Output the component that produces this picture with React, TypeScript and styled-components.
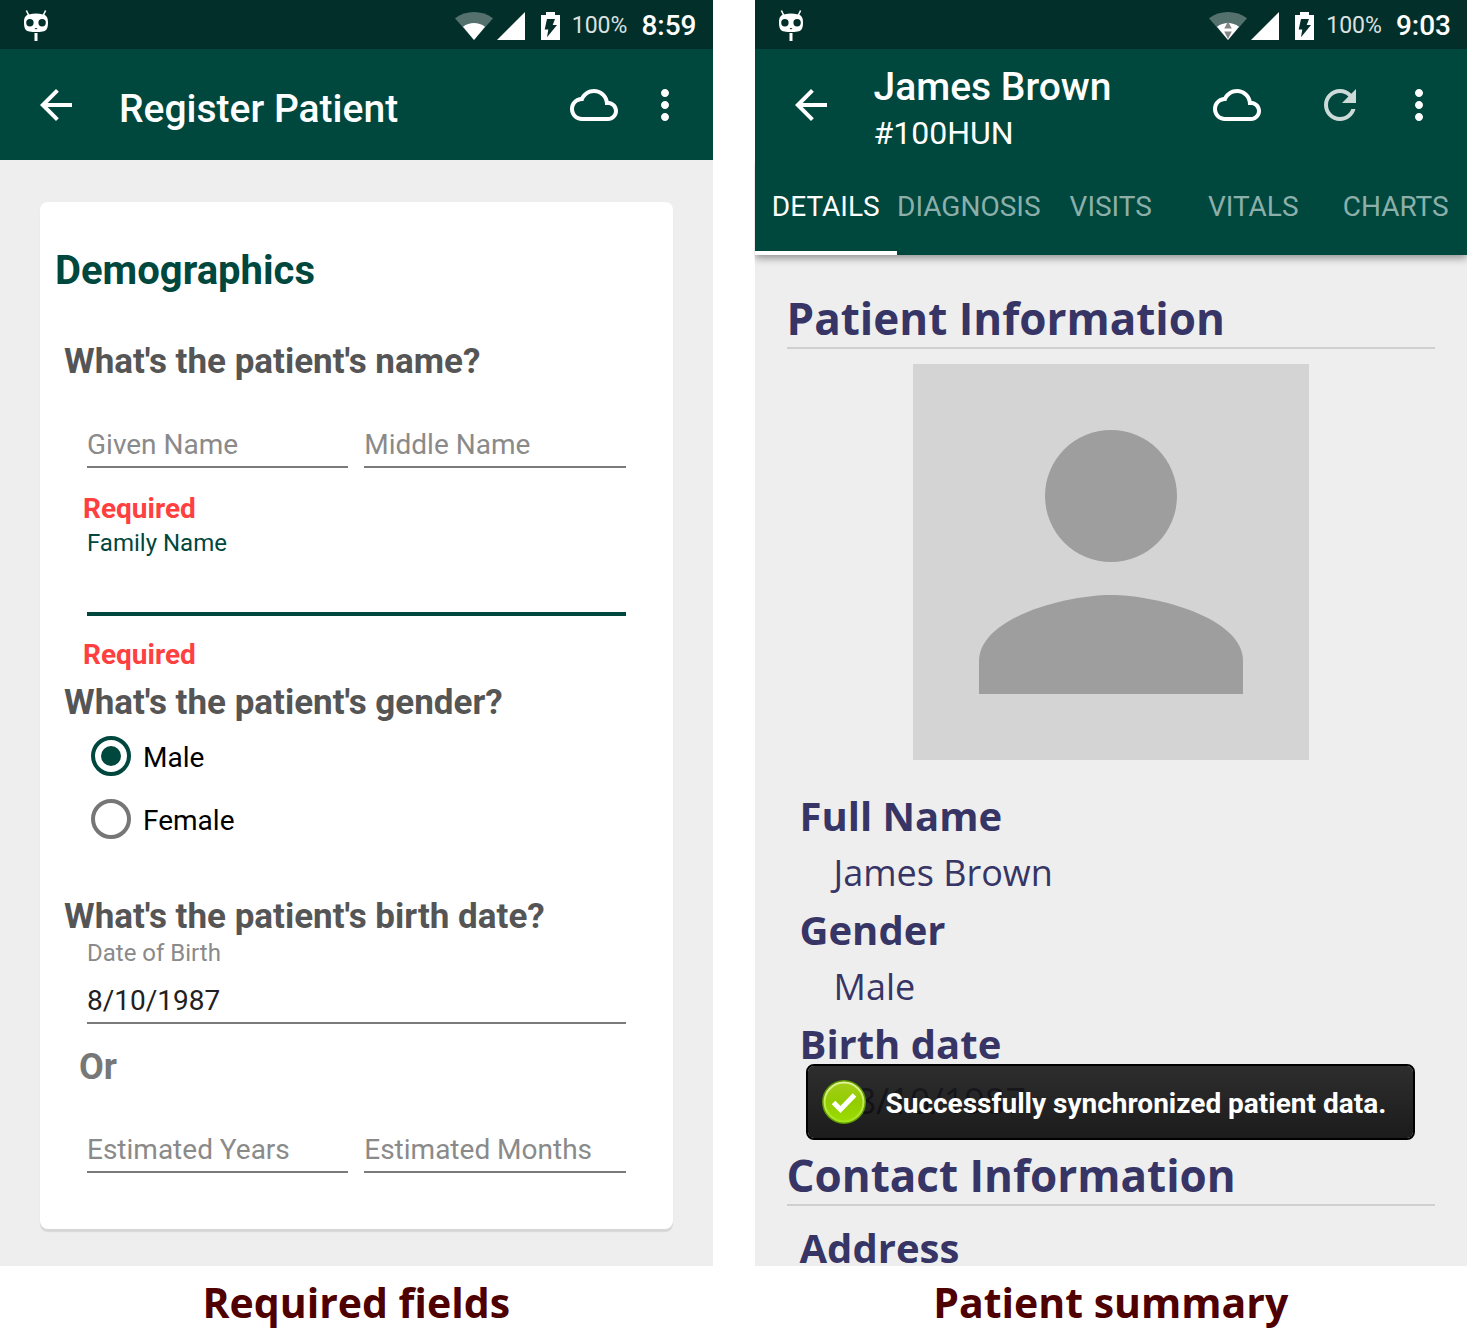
import React, { useState } from "react";
import styled, { createGlobalStyle, css } from "styled-components";

const roboto = `Roboto, "Liberation Sans", sans-serif`;
const openSans = `"Open Sans", "Noto Sans", sans-serif`;

const color = {
  primary: "#00473e",
  primaryDark: "#032f2a",
  surface: "#eeeeee",
  question: "#555555",
  hint: "#8a8a8a",
  line: "#7a7a7a",
  error: "#ff4040",
  ink: "#363565",
  rule: "#cfcfcf",
  caption: "#4f0000",
};

const GlobalStyle = createGlobalStyle`
  *, *::before, *::after { box-sizing: border-box; }
  body { margin: 0; background: #fff; font-family: ${roboto}; }
  h1, h2, h3, p, dl, dd, figure, fieldset { margin: 0; padding: 0; border: 0; }
`;

const Gallery = styled.main`
  display: grid;
  grid-template-columns: repeat(auto-fit, minmax(560px, 1fr));
  gap: 42px;
`;

const Figure = styled.figure`
  display: flex;
  flex-direction: column;
  min-width: 0;
`;

const Caption = styled.figcaption`
  padding: 6px 0 9px;
  text-align: center;
  font: 700 41px/60px ${openSans};
  color: ${color.caption};
`;

const Phone = styled.section`
  position: relative;
  flex: 1;
  display: flex;
  flex-direction: column;
  background: ${color.surface};
`;

/* Status bar */

const StatusBar = styled.div`
  display: flex;
  align-items: center;
  height: 49px;
  padding: 2px 16px 0 24px;
  background: ${color.primaryDark};
  color: #fff;
`;

const StatusGroup = styled.div`
  display: flex;
  align-items: center;
  margin-left: auto;
`;

const StatusIcon = styled.svg<{ $gap: number }>`
  display: block;
  margin-right: ${(p) => p.$gap}px;
`;

const Percent = styled.span`
  margin-right: 14px;
  font-size: 23px;
  line-height: 32px;
  color: #dbe1e0;
`;

const Clock = styled.time`
  font-size: 28px;
  line-height: 32px;
  font-weight: 500;
`;

function MascotIcon() {
  return (
    <StatusIcon $gap={0} width="24" height="32" viewBox="0 0 24 32" aria-hidden="true">
      <path d="M2.4 0.5L4.6 5M21.6 0.5L19.4 5" stroke="#fff" strokeWidth="1.6" fill="none" />
      <path
        fill="#fff"
        d="M6 4.200C9.500 3.400 14.500 3.400 18 4.200C22.400 5 24 7 24 12.500C24 18.500 22.600 20.800 18.500 21.500C14.500 22.200 9.500 22.200 5.500 21.500C1.400 20.800 0 18.500 0 12.500C0 7 1.600 5 6 4.200z"
      />
      <circle cx="5.900" cy="12.700" r="3.700" fill={color.primaryDark} />
      <circle cx="18.100" cy="12.700" r="3.700" fill={color.primaryDark} />
      <ellipse cx="12" cy="18.600" rx="1.300" ry="0.600" fill={color.primaryDark} />
      <rect x="10.500" y="23" width="3" height="8" fill="#fff" />
    </StatusIcon>
  );
}

function WifiIcon({ active }: { active?: boolean }) {
  return (
    <StatusIcon $gap={4} width="38" height="28" viewBox="0 0 38 28" aria-hidden="true">
      <path fill="#fff" fillOpacity="0.32" d="M19 28L0 6.200C11-2 27-2 38 6.200z" />
      <path fill="#fff" d="M19 28L8 14.800C14.500 9.800 23.500 9.800 30 14.800z" />
      {active && <path fill="#858585" d="M19 9.500L22.800 16.500H15.200zM15.200 19.500H22.800L19 27z" />}
    </StatusIcon>
  );
}

function StatusIcons({ time, syncing }: { time: string; syncing?: boolean }) {
  return (
    <StatusBar>
      <MascotIcon />
      <StatusGroup>
        <WifiIcon active={syncing} />
        <StatusIcon $gap={16} width="28" height="28" viewBox="0 0 28 28" aria-hidden="true">
          <path fill="#fff" d="M0 28L28 0V28z" />
        </StatusIcon>
        <StatusIcon $gap={12} width="19" height="28" viewBox="0 0 19 28" aria-hidden="true">
          <path fill="#fff" d="M5 0H14V3H19V28H0V3H5z" />
          <path fill={color.primaryDark} d="M6 7H14L11.700 13H16L6 25.300L7.300 17.500H3.700z" />
        </StatusIcon>
        <Percent>100%</Percent>
        <Clock>{time}</Clock>
      </StatusGroup>
    </StatusBar>
  );
}

/* App bar */

const AppBar = styled.header`
  position: relative;
  z-index: 1;
  display: flex;
  align-items: center;
  height: 111px;
  padding: 0 24px 0 32px;
  background: ${color.primary};
  color: #fff;
`;

const IconButton = styled.button<{ $gap?: number; $faded?: boolean }>`
  flex: none;
  width: 48px;
  height: 48px;
  margin-right: ${(p) => p.$gap ?? 0}px;
  padding: 0;
  border: 0;
  background: none;
  color: #fff;
  opacity: ${(p) => (p.$faded ? 0.8 : 1)};
  cursor: pointer;

  svg {
    display: block;
    width: 48px;
    height: 48px;
    fill: currentColor;
  }
`;

const Titles = styled.div`
  flex: 1;
  min-width: 0;
  padding-top: 8px;
`;

const Title = styled.h1`
  font-size: 39px;
  line-height: 48px;
  font-weight: 500;
`;

const Subtitle = styled.p`
  font-size: 32px;
  line-height: 44px;
`;

const paths = {
  back: "M20 11H7.830l5.590-5.590L12 4l-8 8 8 8 1.410-1.410L7.830 13H20v-2z",
  cloud:
    "M19.350 10.040C18.670 6.590 15.640 4 12 4 9.110 4 6.600 5.640 5.350 8.040 2.340 8.360 0 10.910 0 14c0 3.310 2.690 6 6 6h13c2.760 0 5-2.240 5-5 0-2.640-2.050-4.780-4.650-4.960zM19 18H6c-2.210 0-4-1.790-4-4s1.790-4 4-4h.71C7.370 7.690 9.480 6 12 6c3.040 0 5.500 2.460 5.500 5.500v.5H19c1.660 0 3 1.340 3 3s-1.340 3-3 3z",
  refresh:
    "M17.650 6.350C16.200 4.900 14.210 4 12 4c-4.420 0-7.990 3.580-7.990 8s3.570 8 7.990 8c3.730 0 6.840-2.550 7.730-6h-2.080c-.820 2.330-3.040 4-5.650 4-3.310 0-6-2.690-6-6s2.690-6 6-6c1.660 0 3.140.690 4.220 1.780L13 11h7V4l-2.350 2.350z",
  more: "M12 8c1.100 0 2-.9 2-2s-.9-2-2-2-2 .9-2 2 .9 2 2 2zm0 2c-1.100 0-2 .9-2 2s.9 2 2 2 2-.9 2-2-.9-2-2-2zm0 6c-1.100 0-2 .9-2 2s.9 2 2 2 2-.9 2-2-.9-2-2-2z",
};

function Action(props: { icon: keyof typeof paths; label: string; gap?: number; faded?: boolean }) {
  return (
    <IconButton type="button" aria-label={props.label} $gap={props.gap} $faded={props.faded}>
      <svg viewBox="0 0 24 24" aria-hidden="true">
        <path d={paths[props.icon]} />
      </svg>
    </IconButton>
  );
}

/* Registration form */

const FormArea = styled.div`
  padding: 42px 40px 37px;
`;

const Card = styled.form`
  padding: 45px 0 56px;
  border-radius: 8px;
  background: #fff;
  box-shadow: 0 3px 1px #d6d6d6;
`;

const SectionTitle = styled.h2`
  padding-left: 15px;
  font-size: 40px;
  line-height: 48px;
  font-weight: 700;
  color: ${color.primary};
`;

const Question = styled.h3<{ $top?: number }>`
  padding-left: 24px;
  margin-top: ${(p) => p.$top ?? 0}px;
  font-size: 35px;
  line-height: 42px;
  font-weight: 700;
  color: ${color.question};
`;

const FieldRow = styled.div<{ $top: number }>`
  display: grid;
  grid-auto-flow: column;
  grid-auto-columns: minmax(0, 1fr);
  gap: 16px;
  margin-top: ${(p) => p.$top}px;
  padding: 0 47px;
`;

const FieldLabel = styled.label<{ $active?: boolean }>`
  display: block;
  font-size: 24px;
  line-height: 28px;
  color: ${(p) => (p.$active ? color.primary : color.hint)};
`;

const TextInput = styled.input<{ $active?: boolean; $top?: number }>`
  display: block;
  width: 100%;
  height: 44px;
  margin-top: ${(p) => p.$top ?? 0}px;
  padding: 0 0 2px;
  border: 0;
  border-bottom: 2px solid ${color.line};
  border-radius: 0;
  outline: 0;
  background: none;
  font: 400 28px/32px ${roboto};
  color: #212121;

  &::placeholder {
    color: ${color.hint};
    opacity: 1;
  }

  ${(p) =>
    p.$active &&
    css`
      border-bottom: 4px solid ${color.primary};
    `}
`;

const ErrorText = styled.p<{ $top: number }>`
  margin-top: ${(p) => p.$top}px;
  padding-left: 43px;
  font-size: 28px;
  line-height: 32px;
  font-weight: 700;
  color: ${color.error};
`;

const RadioGroup = styled.fieldset`
  padding-left: 51px;
`;

const RadioRow = styled.label`
  display: flex;
  align-items: center;
  gap: 12px;
  height: 63px;
  font-size: 28px;
  line-height: 32px;
  color: #000;
`;

const RadioText = styled.span`
  padding-top: 4px;
`;

const Radio = styled.input`
  appearance: none;
  flex: none;
  width: 40px;
  height: 40px;
  margin: 0;
  padding: 6px;
  border: 4px solid #767676;
  border-radius: 50%;

  &:checked {
    border-color: ${color.primary};
    background: ${color.primary} content-box;
  }
`;

const OrText = styled.p`
  margin-top: 22px;
  padding-left: 39px;
  font-size: 36px;
  line-height: 42px;
  font-weight: 700;
  color: #777;
`;

function RegisterScreen() {
  const [gender, setGender] = useState("Male");
  return (
    <Phone>
      <StatusIcons time="8:59" />
      <AppBar>
        <Action icon="back" label="Back" gap={39} />
        <Titles>
          <Title>Register Patient</Title>
        </Titles>
        <Action icon="cloud" label="Sync" gap={23} />
        <Action icon="more" label="More options" />
      </AppBar>
      <FormArea>
        <Card>
          <SectionTitle>Demographics</SectionTitle>

          <Question $top={46}>What's the patient's name?</Question>
          <FieldRow $top={41}>
            <TextInput aria-label="Given Name" placeholder="Given Name" />
            <TextInput aria-label="Middle Name" placeholder="Middle Name" />
          </FieldRow>
          <ErrorText $top={25}>Required</ErrorText>
          <FieldRow $top={4}>
            <div>
              <FieldLabel htmlFor="family" $active>
                Family Name
              </FieldLabel>
              <TextInput id="family" $active $top={15} />
            </div>
          </FieldRow>
          <ErrorText $top={23}>Required</ErrorText>

          <Question $top={11} id="gender-question">
            What's the patient's gender?
          </Question>
          <RadioGroup aria-labelledby="gender-question">
            {["Male", "Female"].map((g) => (
              <RadioRow key={g}>
                <Radio type="radio" name="gender" checked={gender === g} onChange={() => setGender(g)} />
                <RadioText>{g}</RadioText>
              </RadioRow>
            ))}
          </RadioGroup>

          <Question $top={46}>What's the patient's birth date?</Question>
          <FieldRow $top={1}>
            <div>
              <FieldLabel htmlFor="dob">Date of Birth</FieldLabel>
              <TextInput id="dob" defaultValue="8/10/1987" $top={13} />
            </div>
          </FieldRow>
          <OrText>Or</OrText>
          <FieldRow $top={41}>
            <TextInput aria-label="Estimated Years" placeholder="Estimated Years" />
            <TextInput aria-label="Estimated Months" placeholder="Estimated Months" />
          </FieldRow>
        </Card>
      </FormArea>
    </Phone>
  );
}

/* Patient summary */

const Tabs = styled.nav`
  display: grid;
  grid-template-columns: repeat(5, minmax(0, 1fr));
  height: 95px;
  background: ${color.primary};
  box-shadow: 0 3px 8px rgba(0, 0, 0, 0.4);
  clip-path: inset(0 0 -16px 0);
`;

const Tab = styled.button<{ $selected: boolean }>`
  padding: 2px 0 0;
  border: 0;
  border-bottom: 4px solid ${(p) => (p.$selected ? "#fff" : "transparent")};
  background: none;
  font: 400 28px/32px ${roboto};
  white-space: nowrap;
  color: ${(p) => (p.$selected ? "#fff" : "#8cafaa")};
  cursor: pointer;
`;

const Scroller = styled.div`
  flex: 1 1 0px;
  height: 0;
  min-height: 0;
  overflow-y: auto;
  scrollbar-width: none;
  padding: 32px 32px 0;
  font-family: ${openSans};
  color: ${color.ink};
`;

const InfoTitle = styled.h2`
  padding-top: 2px;
  border-bottom: 2px solid ${color.rule};
  font-size: 44px;
  line-height: 58px;
  font-weight: 700;
`;

const Avatar = styled.svg`
  display: block;
  width: min(396px, 100%);
  aspect-ratio: 1;
  margin: 15px auto 27px;
  background: #d4d4d4;
  fill: #9e9e9e;
`;

const Facts = styled.dl`
  margin-bottom: 15px;
  padding-left: 13px;
  line-height: 57px;
`;

const Term = styled.dt`
  font-size: 40px;
  font-weight: 700;
`;

const Value = styled.dd<{ $nested?: boolean }>`
  padding-left: ${(p) => (p.$nested ? 56 : 34)}px;
  font-size: 36px;
`;

const AddressFacts = styled(Facts)`
  margin-top: 13px;
`;

const Toast = styled.div`
  position: absolute;
  left: 51px;
  right: 52px;
  bottom: 126px;
  display: flex;
  align-items: center;
  gap: 20px;
  height: 76px;
  padding: 0 14px;
  border: 2px solid #000;
  border-radius: 8px;
  background: linear-gradient(rgba(25, 25, 25, 0.9), rgba(5, 5, 5, 0.9)) padding-box;
  font-size: 28px;
  line-height: 32px;
  font-weight: 700;
  white-space: nowrap;
  color: #fff;

  svg {
    flex: none;
  }
`;

const ToastText = styled.span`
  padding-top: 4px;
`;

function SummaryScreen() {
  const [tab, setTab] = useState("DETAILS");
  return (
    <Phone>
      <StatusIcons time="9:03" syncing />
      <AppBar>
        <Action icon="back" label="Back" gap={39} />
        <Titles>
          <Title>James Brown</Title>
          <Subtitle>#100HUN</Subtitle>
        </Titles>
        <Action icon="cloud" label="Sync" gap={55} />
        <Action icon="refresh" label="Refresh" gap={31} faded />
        <Action icon="more" label="More options" />
      </AppBar>
      <Tabs>
        {["DETAILS", "DIAGNOSIS", "VISITS", "VITALS", "CHARTS"].map((t) => (
          <Tab key={t} type="button" $selected={t === tab} onClick={() => setTab(t)}>
            {t}
          </Tab>
        ))}
      </Tabs>
      <Scroller>
        <InfoTitle>Patient Information</InfoTitle>
        <Avatar viewBox="0 0 24 24" role="img" aria-label="Patient photo">
          <circle cx="12" cy="8" r="4" />
          <path d="M12 14c-2.670 0-8 1.340-8 4v2h16v-2c0-2.660-5.330-4-8-4z" />
        </Avatar>
        <Facts>
          <Term>Full Name</Term>
          <Value>James Brown</Value>
          <Term>Gender</Term>
          <Value>Male</Value>
          <Term>Birth date</Term>
          <Value $nested>8/10/1987</Value>
        </Facts>
        <InfoTitle>Contact Information</InfoTitle>
        <AddressFacts>
          <Term>Address</Term>
        </AddressFacts>
      </Scroller>
      <Toast role="status">
        <svg width="44" height="44" viewBox="0 0 44 44" aria-hidden="true">
          <defs>
            <linearGradient id="disc" x1="0" y1="0" x2="0" y2="1">
              <stop offset="0" stopColor="#a4cf1c" />
              <stop offset="0.5" stopColor="#93cc00" />
              <stop offset="1" stopColor="#9bdc00" />
            </linearGradient>
            <linearGradient id="rim" x1="0" y1="0" x2="0" y2="1">
              <stop offset="0" stopColor="#e2f39a" />
              <stop offset="1" stopColor="#a5e31a" />
            </linearGradient>
          </defs>
          <circle cx="22" cy="22" r="22" fill="#5f9a00" />
          <circle cx="22" cy="22" r="19.500" fill="url(#disc)" stroke="url(#rim)" strokeWidth="2" />
          <path d="M11.500 22.500L18.500 29.500L32.500 15" fill="none" stroke="#fff" strokeWidth="5" />
        </svg>
        <ToastText>Successfully synchronized patient data.</ToastText>
      </Toast>
    </Phone>
  );
}

export default function App() {
  return (
    <>
      <GlobalStyle />
      <Gallery>
        <Figure>
          <RegisterScreen />
          <Caption>Required fields</Caption>
        </Figure>
        <Figure>
          <SummaryScreen />
          <Caption>Patient summary</Caption>
        </Figure>
      </Gallery>
    </>
  );
}
